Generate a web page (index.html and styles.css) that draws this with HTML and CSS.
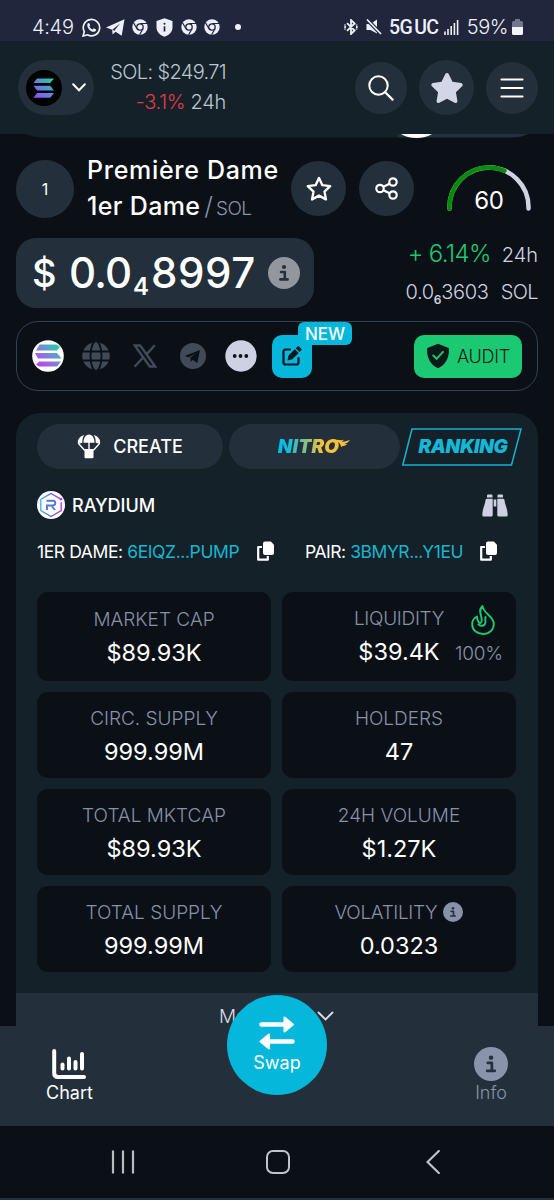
FILE: index.html
```html
<!DOCTYPE html>
<html lang="en">
<head>
<meta charset="utf-8">
<title>Première Dame / SOL</title>
<link rel="stylesheet" href="styles.css">
</head>
<body>
<svg width="0" height="0" class="defs">
  <defs>
    <linearGradient id="sol" x1="0" y1="1" x2="1" y2="0"><stop offset="0" stop-color="#9a45ff"/><stop offset=".5" stop-color="#5f88d8"/><stop offset="1" stop-color="#19d99a"/></linearGradient>
    <linearGradient id="solBright" gradientUnits="userSpaceOnUse" x1="6" y1="28" x2="26" y2="3"><stop offset="0" stop-color="#cf35f5"/><stop offset=".5" stop-color="#7e83d8"/><stop offset="1" stop-color="#16dba0"/></linearGradient>
    <linearGradient id="ray" x1="0" y1="0" x2="1" y2="0"><stop offset="0" stop-color="#45b9dc"/><stop offset=".5" stop-color="#5664d9"/><stop offset="1" stop-color="#b63bea"/></linearGradient>
    <symbol id="chrome" viewBox="0 0 16 16"><circle cx="8" cy="8" r="7.7" fill="#edf0fa"/><circle cx="8" cy="8" r="3.2" fill="#edf0fa" stroke="#21263d" stroke-width="1.3"/><path d="M8 4.5h7M5 9.8 1.5 3.7M11 9.8 7.6 15.7" stroke="#21263d" stroke-width="1.2"/></symbol>
    <symbol id="info" viewBox="0 0 32 32"><circle cx="16" cy="16" r="16" fill="currentColor"/><circle cx="16" cy="10" r="2.1" fill="#24313c"/><path d="M13 15h3.8v7.2M12.4 22.4h7.2" fill="none" stroke="#24313c" stroke-width="2.6" stroke-linecap="round" stroke-linejoin="round"/></symbol>
    <symbol id="star" viewBox="0 0 576 512"><path d="M259.3 17.8L194 150.2 47.9 171.5c-26.2 3.8-36.7 36.1-17.7 54.6l105.7 103-25 145.5c-4.5 26.3 23.2 46 46.4 33.7L288 439.6l130.7 68.7c23.2 12.2 50.9-7.4 46.4-33.7l-25-145.5 105.7-103c19-18.5 8.5-50.8-17.7-54.6L382 150.2 316.7 17.8c-11.7-23.6-45.6-23.9-57.4 0z"/></symbol>
    <symbol id="copy" viewBox="0 0 18 20"><path d="M5 6H1.2v12.7h9.6V15" fill="none" stroke="#fff" stroke-width="2.2" stroke-linejoin="round"/><path d="M8 .5h5.8L17 3.7V12a2 2 0 0 1-2 2H8a2 2 0 0 1-2-2V2.500A2 2 0 0 1 8 .5z" fill="#fff"/></symbol>
  </defs>
</svg>

<div class="phone">
  <div class="status">
    <span class="clock">4:49</span>
    <div class="status-icons">
      <svg width="19" height="19" viewBox="0 0 19 19"><path d="M1.100 18l1.200-4.400A8.200 8.200 0 1 1 5.500 16.800z" fill="none" stroke="#edf0fa" stroke-width="1.700"/><path d="M5.500 5.700c.8-1.200 1.700-.9 2-.1l.7 1.600-.9 1.300c.8 1.500 1.700 2.300 3.200 3l1.200-1.200 2 .9c.9.500.5 1.700-.8 2.400-3.700 1.500-8.800-4-7.400-7.900z" fill="#edf0fa"/></svg>
      <svg width="19" height="17" viewBox="0 0 19 17"><path d="M0 8.500 18.500.3 15.700 16.700 9.600 12.800 6.600 15.500 6.200 10.800z" fill="#edf0fa"/><path d="M6.400 10.700 14.200 4.300 8.300 11.800" fill="#21263d"/></svg>
      <svg width="16" height="16"><use href="#chrome"/></svg>
      <svg width="17" height="19" viewBox="0 0 17 19"><path d="M8.500.3 16.500 3v6c0 5-3.200 8-8 9.800C3.700 17 .5 14 .5 9V3z" fill="#edf0fa"/><path d="M8.500 8.300v5.200" stroke="#21263d" stroke-width="1.700"/><circle cx="8.500" cy="5.700" r="1" fill="#21263d"/></svg>
      <svg width="16" height="16"><use href="#chrome"/></svg>
      <svg width="16" height="16"><use href="#chrome"/></svg>
    </div>
    <i class="dot"></i>
    <div class="signals">
      <svg width="14" height="16" viewBox="0 0 14 16"><path d="M3 4.200 10.600 11.500 7 15V1l3.600 3.500L3 11.800M.3 8h1.600M12 8h1.700M12.500 5.500v1M12.500 9.500v1M1 5.500v1M1 9.500v1" fill="none" stroke="#edf0fa" stroke-width="1.800"/></svg>
      <svg width="16" height="16" viewBox="0 0 16 16"><path d="M.5 5h4L11 .5v14L4.500 11h-4z" fill="#edf0fa"/><path d="M1 .5 15 15" stroke="#21263d" stroke-width="3.800"/><path d="M1 .5 15 15" stroke="#edf0fa" stroke-width="1.700"/></svg>
      <span class="net">5G<b>UC</b></span>
      <svg width="15" height="16" viewBox="0 0 15 16"><path d="M1 12.500V16M4 10v6M7.200 7v9M10.400 4v12M13.600 1v15" stroke="#edf0fa" stroke-width="1.600"/></svg>
      <span class="pct">59%</span>
      <svg class="battery" width="11" height="16" viewBox="0 0 11 16"><path d="M3 0h5v2h1.500A1.500 1.500 0 0 1 11 3.500V9H0V3.500A1.500 1.500 0 0 1 1.500 2H3z" fill="#72768a"/><path d="M0 8h11v6.500a1.500 1.500 0 0 1-1.500 1.500h-8A1.500 1.500 0 0 1 0 14.500z" fill="#f2f4fb"/></svg>
    </div>
  </div>

  <header class="header">
    <div class="chain">
      <svg width="36" height="36" viewBox="0 0 36 36"><circle cx="18" cy="18" r="18" fill="#000"/><path d="M11 8.500h17l-3.700 4.600H7.500zM7.500 15.800h16.800l3.700 4.600H11zM11 23h17l-3.700 4.700H7.500z" fill="url(#sol)"/></svg>
      <svg width="14" height="9" viewBox="0 0 14 9"><path d="m1.200 1.300 5.800 5.900 5.800-5.900" fill="none" stroke="#fff" stroke-width="2" stroke-linecap="round"/></svg>
    </div>
    <div class="sol-price"><span class="line-a">SOL: $249.71</span><span class="line-b"><em>-3.1%</em> 24h</span></div>
    <div class="actions">
      <div class="round small"><svg width="26" height="26" viewBox="0 0 26 26"><circle cx="10.500" cy="10.500" r="9.200" fill="none" stroke="#fff" stroke-width="2"/><path d="m17.200 17.200 7.400 7.400" stroke="#fff" stroke-width="2.200" stroke-linecap="round"/></svg></div>
      <div class="round"><svg width="34" height="30" fill="#d3d6e6"><use href="#star"/></svg></div>
      <div class="round small"><svg width="24" height="20" viewBox="0 0 24 20"><path d="M1.500 1.500h21M1.500 10h21M1.500 18.500h21" stroke="#fff" stroke-width="2.200" stroke-linecap="round"/></svg></div>
    </div>
  </header>
  <svg class="strip" width="554" height="4" viewBox="0 0 554 4"><path d="M26 0H400V3.500H42Q32 3 26 0z" fill="#152129"/><path d="M398 0H528Q521 3.500 512 3.500H398z" fill="#23303b"/><path d="M401 0h31q-6 4-15.500 4T401 0z" fill="#fff"/></svg>

  <main class="content">
    <section class="title-row">
      <div class="rank">1</div>
      <h1 class="name"><span class="name-a">Première Dame</span><span class="name-b">1er Dame</span><i>/</i><small>SOL</small></h1>
      <div class="round fav"><svg width="28" height="27" viewBox="-20 -20 616 552" fill="none" stroke="#fff" stroke-width="52"><path d="M288 25 362 182 535 205 409 325 441 496 288 413 135 496 167 325 41 205 214 182z" stroke-linejoin="round"/></svg></div>
      <div class="round share"><svg width="24" height="24" viewBox="0 0 24 24"><g fill="none" stroke="#fff" stroke-width="2.200"><circle cx="5" cy="11.500" r="3.700"/><circle cx="18" cy="5" r="3.700"/><circle cx="18" cy="18" r="3.700"/><path d="m8.400 9.800 6.200-3.100M8.400 13.200l6.200 3.100"/></g></svg></div>
      <div class="gauge"><svg width="84" height="46" viewBox="0 0 84 46"><path d="M2.500 43.500V42A39.500 39.500 0 0 1 81.500 42V43.500" fill="none" stroke="#cfd2e3" stroke-width="4.500" stroke-linecap="round"/><path d="M2.500 43.500V42A39.500 39.500 0 0 1 57.500 5.700" fill="none" stroke="#078c09" stroke-width="4.500" stroke-linecap="round"/></svg><span>60</span></div>
    </section>

    <section class="price-row">
      <div class="price"><span class="cur">$</span><span class="p-a">0.0</span><sub>4</sub><span class="p-b">8997</span><svg width="32" height="32" color="#91979d"><use href="#info"/></svg></div>
      <div class="change">
        <div class="ch-a"><b>+ 6.14%</b><span>24h</span></div>
        <div class="ch-b"><b>0.0<sub>6</sub>3603</b><span>SOL</span></div>
      </div>
    </section>

    <section class="links">
      <svg class="l1" width="32" height="32" viewBox="0 0 32 32"><circle cx="16" cy="16" r="15.800" fill="#fff"/><path d="M7.500 4.500h17l3.500 2-3 4H4zM3 13h22l4.500 5.500H6zM7 21.500h22l-4 5H7l-3-2z" fill="url(#solBright)"/></svg>
      <svg class="l2" width="28" height="28" viewBox="0 0 28 28"><circle cx="14" cy="14" r="13.800" fill="#414a57"/><g fill="none" stroke="#0a1016" stroke-width="1.800"><path d="M0 9.500h28M0 18.500h28"/><ellipse cx="14" cy="14" rx="5.500" ry="15"/></g></svg>
      <svg class="l3" width="24" height="24" viewBox="0 0 24 24"><path d="M1.800 1.500h5.400L22.200 22.500h-5.400zM1.500 22.800 10.600 13M21.800 1.200 13.200 10.600" fill="none" stroke="#414a57" stroke-width="2.400"/></svg>
      <svg class="l4" width="26" height="26" viewBox="0 0 26 26"><circle cx="13" cy="13" r="13" fill="#414a57"/><path d="M4.500 13 20 7l-2.700 13-4.500-3.300-2.200 2.200-.2-4.200 5.500-4.700-7 4.300z" fill="#0a1016"/></svg>
      <svg class="l5" width="32" height="32" viewBox="0 0 32 32"><circle cx="16" cy="16" r="15.700" fill="#ced1e2"/><g fill="#0d141b"><circle cx="9.700" cy="16" r="1.900"/><circle cx="15.500" cy="16" r="1.900"/><circle cx="21.300" cy="16" r="1.900"/></g></svg>
      <div class="edit"><svg width="20" height="20" viewBox="0 0 20 20"><path d="M8 3.500H3.500a2 2 0 0 0-2 2v11a2 2 0 0 0 2 2h11a2 2 0 0 0 2-2V12" fill="none" stroke="#0a1720" stroke-width="2.200" stroke-linecap="round"/><path d="m6.500 9.500 6.300-6.300 3.800 3.800-6.300 6.300-4.800 1.200zM13.800 2.200l1.300-1.300a1.700 1.700 0 0 1 2.500 0l1.300 1.300a1.700 1.700 0 0 1 0 2.500L17.600 6z" fill="#0a1720"/></svg><span class="new">NEW</span></div>
      <div class="audit"><svg width="24" height="26" viewBox="0 0 24 26"><path d="M12 .8 22 4.700q1 .4 1 1.600C23 15 20 21.500 12 25.300 4 21.500 1 15 1 6.300q0-1.200 1-1.600z" fill="#0a1a17"/><path d="m7.300 12.500 3.300 3.400 6.400-7" fill="none" stroke="#1bc973" stroke-width="2" stroke-linecap="round"/></svg><span>AUDIT</span></div>
    </section>

    <section class="panel">
      <div class="tabs">
        <div class="tab create"><svg width="24" height="25" viewBox="0 0 24 25"><path d="M6.500 8.700C6.500-2.300 17.500-2.300 17.500 8.700zM5.300 8.700 1 10C0 5.500 3 2.200 7.500 1 5.700 3 5.300 5 5.300 8.700zM18.700 8.700 23 10c1-4.500-2-7.800-6.500-9 1.800 2 2.200 4 2.200 7.700zM8.500 15h7q1 0 1 1v7.300q0 1-1 1h-7q-1 0-1-1V16q0-1 1-1z" fill="#fff"/><path d="m1.500 9.500 6.300 7M22.500 9.500l-6.300 7M12 7.500v9" stroke="#fff" stroke-width="1.400"/></svg><span>CREATE</span></div>
        <div class="tab nitro"><span>NITRO</span><svg width="20" height="14" viewBox="0 0 20 14"><path d="M1 2.500C6 .8 10 3 13 1.800c-1 1-1.800 1.500-2.500 1.700 3 .5 5.500-.5 8.500-1.700-1.500 2.500-3 3.300-5.500 4 1.500.5 2 .4 3 .1-2 2.100-5 1.600-6.500 3.100C10 6.300 8.500 3 1 2.500z" fill="#f3c13b"/></svg></div>
        <div class="ranking"><svg width="120" height="38" viewBox="0 0 120 38"><path d="M10 1h109l-9.500 36H.8z" fill="none" stroke="#15b3cf" stroke-width="1.500"/></svg><span>RANKING</span></div>
      </div>

      <div class="dex">
        <svg width="28" height="28" viewBox="0 0 28 28"><circle cx="14" cy="14" r="14" fill="#fff"/><path d="M23.800 8.200 14 2.500 3.800 8.300v11.400L14 25.500l10.200-5.800v-8.500" fill="none" stroke="url(#ray)" stroke-width="1.400"/><path d="M9.500 9.800H16q2.300 0 2.300 2.300T16 14.500h-6V19M15 15.500l3 3.500" fill="none" stroke="#5376d9" stroke-width="1.900"/><circle cx="24" cy="8.300" r="1.200" fill="#bd2be3"/></svg>
        <span>RAYDIUM</span>
        <svg class="bino" width="26" height="23" viewBox="0 0 26 23"><path d="M6 .5h3.500q1 0 1 1V3.500H5V1.500q0-1 1-1zM16.500.5H20q1 0 1 1v2h-5.500v-2q0-1 1-1zM5 4.800h5.700V21q0 1.500-1.500 1.500h-7.500Q.3 22.500.3 21C.5 14 3 11 3.500 6.200Q3.700 4.800 5 4.800zM15.300 4.800H21q1.300 0 1.500 1.400C23 11 25.500 14 25.700 21q0 1.500-1.400 1.500h-7.500q-1.500 0-1.500-1.500zM11.700 5.500h2.600v7h-2.600z" fill="#ccd0e1"/></svg>
      </div>

      <div class="addresses">
        <div class="addr first"><span>1ER DAME: <a>6EIQZ...PUMP</a></span><svg width="18" height="20"><use href="#copy"/></svg></div>
        <div class="addr second"><span>PAIR: <a>3BMYR...Y1EU</a></span><svg width="18" height="20"><use href="#copy"/></svg></div>
      </div>

      <div class="stats">
        <div class="card"><label>MARKET CAP</label><strong>$89.93K</strong></div>
        <div class="card liq"><div class="liq-main"><label>LIQUIDITY</label><strong>$39.4K</strong></div><div class="burn"><svg width="24" height="30" viewBox="0 0 24 30"><path d="M11.500 1C6 6 12 11.500 10.500 16.500 9.500 19.500 6.500 18 6 11.500 3 13 1.200 16 1.200 19.200 1.200 25 6 29 12 29s10.800-4 10.800-10C22.800 11 12.500 9 11.500 1zM14.500 12c-.5 3 .5 4.500-.5 7-1 2.200-4.500 2.300-6.500.5" fill="none" stroke="#1bc973" stroke-width="1.900" stroke-linejoin="round" stroke-linecap="round"/></svg><span>100%</span></div></div>
        <div class="card"><label>CIRC. SUPPLY</label><strong>999.99M</strong></div>
        <div class="card"><label>HOLDERS</label><strong>47</strong></div>
        <div class="card"><label>TOTAL MKTCAP</label><strong>$89.93K</strong></div>
        <div class="card"><label>24H VOLUME</label><strong>$1.27K</strong></div>
        <div class="card"><label>TOTAL SUPPLY</label><strong>999.99M</strong></div>
        <div class="card tight"><label>VOLATILITY <svg width="20" height="20" color="#8791a9"><use href="#info"/></svg></label><strong>0.0323</strong></div>
      </div>
      <div class="more"><span>More info</span><svg width="17" height="11" viewBox="0 0 17 11"><path d="m1.500 1.500 7 7 7-7" fill="none" stroke="#d8dbe8" stroke-width="1.900" stroke-linecap="round"/></svg></div>
    </section>
  </main>

  <nav class="bottom">
    <div class="nav-item chart"><svg width="34" height="30" viewBox="0 0 34 30"><path d="M2.200 2v22q0 4 4 4H32" fill="none" stroke="#fff" stroke-width="4" stroke-linecap="round"/><path d="M10.500 15.500v4M17 9.500v10M23.500 13v6.500M30 5v14.500" stroke="#fff" stroke-width="4" stroke-linecap="round"/></svg><span>Chart</span></div>
    <div class="swap"><svg width="36" height="34" viewBox="0 0 36 34"><path d="M2.500 8.500H27M33.500 25.500H9" stroke="#fff" stroke-width="4.500" stroke-linecap="round"/><path d="M25.500 1.500 34 8.500 25.500 15.500zM10 18.500 1.500 25.500 10 32.500z" fill="#fff" stroke="#fff" stroke-width="2" stroke-linejoin="round"/></svg><span>Swap</span></div>
    <div class="nav-item info"><svg width="34" height="34" color="#8993ac"><use href="#info"/></svg><span>Info</span></div>
  </nav>
  <div class="system">
    <svg width="24" height="24" viewBox="0 0 24 24"><path d="M2 .5v23M12 .5v23M22 .5v23" stroke="#b9bcbf" stroke-width="2.200"/></svg>
    <svg width="24" height="24" viewBox="0 0 24 24"><rect x="1" y="1" width="22" height="22" rx="6" fill="none" stroke="#c1c4c7" stroke-width="2"/></svg>
    <svg width="14" height="24" viewBox="0 0 14 24"><path d="M12.800 1 1.500 12l11.300 11" fill="none" stroke="#c1c4c7" stroke-width="2.200" stroke-linecap="round"/></svg>
  </div>
</div>
</body>
</html>
```
FILE: styles.css
```css
* { box-sizing: border-box; }
body { margin: 0; background: #0a1016; color: #fff; font-family: Inter, sans-serif; font-weight: 400; }
svg { display: block; flex: none; }
.defs { position: absolute; }
.phone { width: 554px; height: 1200px; overflow: hidden; display: flex; flex-direction: column; background: #0a1016; white-space: nowrap; }

.status { height: 41px; flex: none; background: #21263d; display: flex; align-items: center; padding: 13px 31px 0 32px; color: #edf0fa; }
.clock { width: 50px; font-size: 20px; font-weight: 300; letter-spacing: -.3px; }
.status-icons { display: flex; align-items: center; gap: 7px; }
.status-icons svg:nth-child(2) { margin-left: -2px; }
.status-icons svg:nth-child(4) { margin: 0 1px; }
.dot { width: 6px; height: 6px; border-radius: 50%; background: #edf0fa; margin-left: 15px; }
.signals { margin-left: auto; display: flex; align-items: center; }
.signals svg:nth-child(2) { margin: 0 7px 0 8px; }
.net { font-family: Roboto, sans-serif; font-size: 19.500px; font-weight: 500; letter-spacing: -.6px; width: 55px; }
.net b { font-weight: 500; margin-left: 2px; }
.pct { font-size: 20px; font-weight: 300; width: 49px; letter-spacing: -.5px; text-align: right; }
.signals .battery { margin: 0 0 0 4px; }

.header { height: 93px; flex: none; background: #152129; display: flex; padding: 19px 16px 0 18px; align-items: flex-start; }
.chain { width: 76px; height: 55px; border-radius: 28px; background: #23303b; display: flex; align-items: center; gap: 10px; padding-left: 8px; }
.sol-price { width: 132px; height: 60px; display: flex; flex-direction: column; text-align: right; line-height: 30px; margin-top: -3px; color: #bac6d1; font-size: 20px; font-weight: 300; }
.line-a { letter-spacing: -.65px; }
.line-b { letter-spacing: -.3px; }
.sol-price em { font-style: normal; color: #e63b4c; }
.actions { margin-left: auto; display: flex; align-items: center; gap: 12px; }
.round { width: 55px; height: 55px; border-radius: 50%; background: #23303b; display: flex; align-items: center; justify-content: center; flex: none; }
.round.small { width: 52px; height: 52px; }
.strip { margin-bottom: -4px; }

.content { padding: 0 16px; flex: none; height: 892px; }
.title-row { display: flex; height: 104px; padding-top: 26px; }
.rank { width: 58px; height: 58px; border-radius: 50%; background: #23303b; display: flex; align-items: center; justify-content: center; font-size: 16px; }
.name { margin: -8px 0 0 13px; width: 204px; font-size: 25px; font-weight: 500; line-height: 36px; }
.name-a { display: block; letter-spacing: .7px; }
.name-b { letter-spacing: .35px; }
.name i { font-style: normal; font-weight: 300; color: #8993ac; margin: 0 3px 0 4px; }
.name small { font-size: 19px; font-weight: 300; color: #8993ac; letter-spacing: -.6px; }
.fav, .share { margin-top: 1px; }
.share { margin-left: 13px; }
.gauge { position: relative; margin: 5px 0 0 33px; width: 84px; }
.gauge span { position: absolute; left: 0; right: 0; top: 20px; text-align: center; font-size: 24px; line-height: 32px; letter-spacing: -.3px; }

.price-row { display: flex; justify-content: space-between; height: 83px; }
.price { width: 298px; height: 70px; border-radius: 20px; background: #23303b; display: flex; align-items: center; padding-left: 16px; font-size: 42px; font-weight: 450; line-height: 70px; }
.cur { width: 37px; font-size: 38px; }
.p-a { width: 64px; letter-spacing: -.8px; }
.price sub { font-size: 24px; font-weight: 600; line-height: 70px; vertical-align: baseline; width: 18px; margin-top: 28px; }
.p-b { width: 117px; letter-spacing: .6px; }
.change { font-weight: 300; color: #cfd2e0; text-align: right; }
.change b { font-weight: 300; }
.ch-a { height: 32px; line-height: 32px; font-size: 20px; }
.ch-a b { color: #1bc973; font-size: 24px; margin-right: 11px; letter-spacing: -.7px; font-weight: 350; }
.ch-b { height: 40px; line-height: 44px; font-size: 20px; letter-spacing: -.6px; }
.ch-b b { margin-right: 12px; letter-spacing: -.3px; }
.ch-b sub { font-size: 12px; font-weight: 600; line-height: 0; vertical-align: -5px; }

.links { height: 70px; border: 1.5px solid #35414d; border-radius: 22px; display: flex; align-items: center; padding: 0 15px; }
.l2 { margin-left: 18px; } .l3 { margin-left: 23px; } .l4 { margin-left: 23px; } .l5 { margin-left: 19px; }
.edit { position: relative; width: 40px; height: 43px; margin-left: 15px; border-radius: 10px; background: #04b7db; display: flex; align-items: center; justify-content: center; }
.new { position: absolute; left: 26px; top: -13px; width: 54px; height: 23px; border-radius: 6px; background: #04b7db; font-size: 17px; font-weight: 500; line-height: 24px; text-align: center; }
.audit { margin-left: auto; width: 108px; height: 43px; border-radius: 10px; background: #1bc973; display: flex; align-items: center; justify-content: center; gap: 7px; color: #0a1a17; font-size: 18px; font-weight: 350; letter-spacing: -.2px; }

.panel { margin-top: 22px; height: 613px; border-radius: 24px 24px 0 0; background: #152129; padding-top: 11px; display: flex; flex-direction: column; }
.tabs { display: flex; height: 45px; padding-left: 21px; }
.tab { height: 45px; border-radius: 23px; background: #23303b; display: flex; align-items: center; justify-content: center; }
.create { width: 186px; gap: 12px; font-size: 18px; font-weight: 500; }
.nitro { width: 171px; margin-left: 6px; font-size: 19px; font-weight: 900; font-style: italic; }
.nitro span { background: linear-gradient(90deg, #00bce5 12%, #f3c13b 70%); -webkit-background-clip: text; background-clip: text; color: transparent; letter-spacing: .2px; padding-right: 2px; }
.nitro svg { margin-left: -10px; margin-top: -4px; }
.ranking { position: relative; width: 120px; height: 38px; margin: 4px 0 0 2px; }
.ranking span { position: absolute; inset: 0; padding-left: 2px; text-align: center; line-height: 38px; font-size: 19px; font-weight: 900; font-style: italic; color: #14b8d7; letter-spacing: -.3px; }
.dex { display: flex; align-items: center; height: 28px; margin-top: 22px; padding: 0 30px 0 21px; gap: 7px; font-size: 18px; font-weight: 500; }
.bino { margin-left: auto; }
.addresses { display: flex; height: 28px; margin-top: 18px; padding-left: 21px; font-size: 17.500px; }
.addr { display: flex; align-items: center; }
.addr a { color: #18b5d0; }
.first { width: 268px; }
.first span { width: 220px; letter-spacing: -.4px; }
.second span { width: 175px; letter-spacing: -.45px; }
.stats { display: grid; grid-template-columns: 234px 234px; grid-template-rows: 89px 86px 86px 86px; gap: 11px; padding-left: 21px; margin-top: 27px; }
.card { border-radius: 11px; background: #0a1016; display: flex; flex-direction: column; align-items: center; justify-content: center; }
.card label { height: 33px; display: flex; align-items: center; gap: 6px; color: #8791a9; font-size: 19px; font-weight: 300; }
.tight label { letter-spacing: -.35px; }
.card strong { height: 34px; line-height: 34px; font-size: 23.5px; font-weight: 400; }
.liq { flex-direction: row; justify-content: flex-start; padding-left: 72px; }
.liq-main { display: flex; flex-direction: column; align-items: center; width: 90px; margin-top: -3px; }
.liq-main label { letter-spacing: -.3px; }
.burn { display: flex; flex-direction: column; align-items: center; margin-left: 11px; width: 48px; gap: 7px; margin-top: -3px; color: #8791a9; font-size: 19px; font-weight: 300; letter-spacing: -.2px; }
.burn svg { margin-left: 7px; }
.more { margin-top: auto; height: 33px; background: #23303b; display: flex; align-items: center; padding: 13px 0 0 203px; font-size: 19px; font-weight: 300; color: #d8dbe8; }
.more span { width: 98px; }

.bottom { position: relative; height: 100px; flex: none; background: #23303b; display: flex; justify-content: space-between; padding: 21px 46px 0; font-size: 18px; }
.nav-item { display: flex; flex-direction: column; align-items: center; line-height: 24px; }
.chart svg { margin: 2px 0 2px; }
.info { width: 34px; color: #8993ac; font-weight: 300; margin-right: 0; }
.swap { position: absolute; left: 227px; top: -31px; width: 100px; height: 100px; border-radius: 50%; background: #04b7db; display: flex; flex-direction: column; align-items: center; padding-top: 21px; line-height: 25px; }
.system { height: 74px; flex: none; border-bottom: 2px solid #23303b; display: flex; align-items: center; padding-left: 111px; gap: 131px; }
.system svg:last-child { margin-left: 5px; }
```
